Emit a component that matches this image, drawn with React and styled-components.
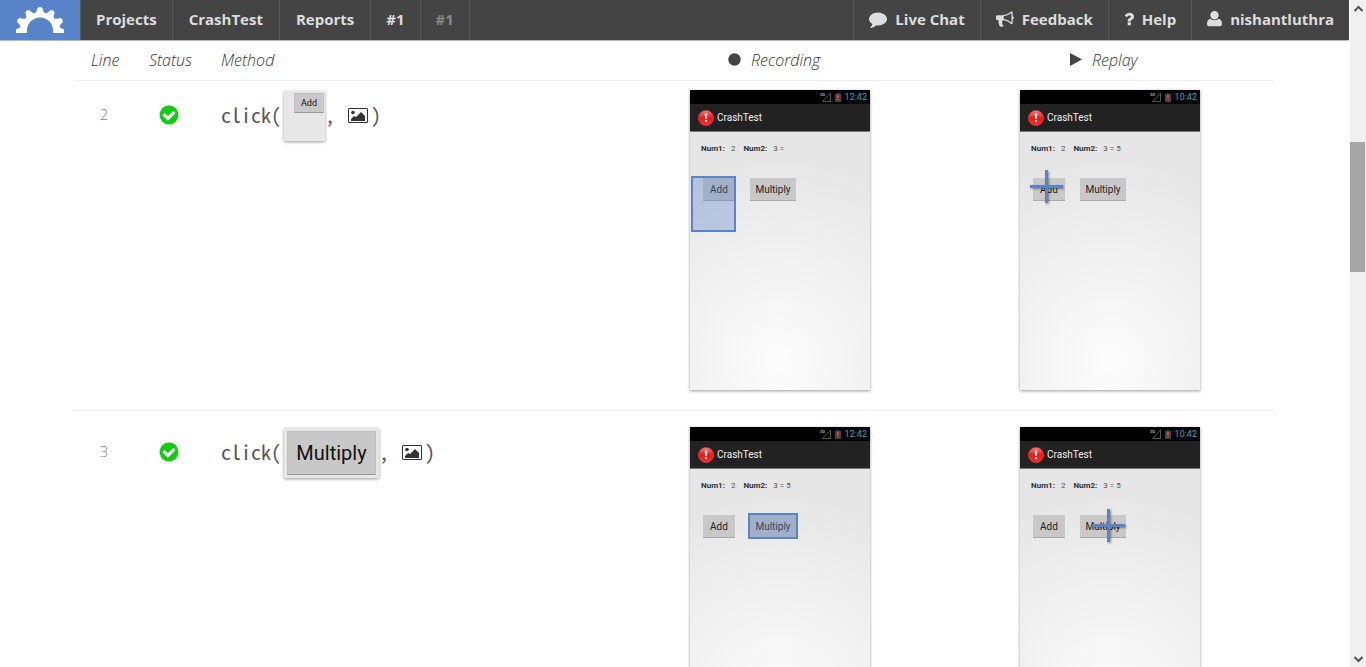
import React from 'react';
import styled, { createGlobalStyle } from 'styled-components';

const GlobalStyle = createGlobalStyle`
  * {
    box-sizing: border-box;
  }

  body {
    margin: 0;
    background: #fff;
    color: #333;
    font-family: 'Open Sans', sans-serif;
    font-size: 16px;
  }
`;

const Shell = styled.div`
  display: grid;
  grid-template-columns: 1fr 17px;
  height: 100vh;
  overflow: hidden;
`;

const Page = styled.div`
  min-width: 0;
  overflow: hidden;
`;

const TopBar = styled.header`
  display: flex;
  justify-content: space-between;
  height: 41px;
  background: #444;
  border-bottom: 1px solid #bbb;
`;

const Nav = styled.nav`
  display: flex;
`;

const LogoLink = styled.a`
  display: flex;
  align-items: center;
  justify-content: center;
  width: 80px;
  background: #5984c9;
`;

const NavLink = styled.a`
  display: flex;
  align-items: center;
  gap: 8px;
  padding: 0 ${({ $wide }) => ($wide ? '16px' : '15px')} 2px;
  border-left: 1px solid #575757;
  border-right: ${({ $last }) => ($last ? '1px solid #575757' : '0')};
  color: ${({ $muted }) => ($muted ? '#888' : '#ddd')};
  font-size: 15px;
  font-weight: 700;
  line-height: 20px;
  text-decoration: none;
  white-space: nowrap;
`;

const Icon = styled.svg`
  display: block;
  flex: none;
  fill: currentColor;
`;

const Steps = styled.table`
  width: calc(100% - 150px);
  max-width: 1200px;
  margin: 0 auto;
  border-collapse: separate;
  border-spacing: 0;
  table-layout: fixed;
`;

const HeadCell = styled.th`
  width: ${({ $width }) => $width || 'auto'};
  height: 40px;
  padding: 0 0 2px;
  padding-left: ${({ $indent }) => $indent || '0'};
  border-bottom: 1px solid #eee;
  font-style: italic;
  font-weight: 300;
  line-height: 20px;
  text-align: left;
`;

const HeadLabel = styled.span`
  display: flex;
  align-items: center;
  gap: 10px;
`;

const Cell = styled.td`
  padding: 16px 0 20px;
  border-bottom: 1px solid #eee;
  vertical-align: top;

  tr:first-child > & {
    padding-top: 9px;
  }
`;

const LineNumber = styled.div`
  width: 58px;
  padding-top: 14px;
  color: #888;
  font-size: 15px;
  font-weight: 300;
  line-height: 20px;
  text-align: center;
`;

const Status = styled.div`
  padding: 14px 0 0 9px;
  color: #12cc12;
`;

const Call = styled.div`
  display: flex;
  align-items: flex-start;
  color: #555;
  font-family: 'Noto Sans Mono CJK SC', 'Liberation Mono', monospace;
  font-size: 20px;
  line-height: 50px;
`;

const PictureButton = styled.button`
  display: block;
  margin: 18px 3px 0 13px;
  padding: 0;
  border: 0;
  background: none;
  color: #333;
`;

const Thumb = styled.div`
  width: ${({ $large }) => ($large ? '95px' : '41px')};
  height: 50px;
  margin: 1px 0 0 3px;
  padding: ${({ $large }) => ($large ? '3px' : '2px 1px 0 10px')};
  background: #e7e7e7;
  box-shadow: 0 1px 3px rgba(0, 0, 0, 0.4);
`;

const ThumbLabel = styled.div`
  height: ${({ $large }) => ($large ? '44px' : '20px')};
  border: 1px solid #c0c0c0;
  border-bottom-color: #999;
  background: #c8c8c8;
  color: #111;
  font-family: Roboto, sans-serif;
  font-size: ${({ $large }) => ($large ? '20px' : '9px')};
  line-height: ${({ $large }) => ($large ? '42px' : '18px')};
  text-align: center;
`;

const Phone = styled.div`
  position: relative;
  width: 180px;
  height: 300px;
  background: radial-gradient(circle at 50% 90%, #fcfcfc 0, #e6e6e6 200px);
  box-shadow: 0 1px 3px rgba(0, 0, 0, 0.4);
  color: #333;
  font-family: Roboto, sans-serif;
`;

const PhoneStatus = styled.div`
  display: flex;
  align-items: center;
  justify-content: flex-end;
  gap: 4px;
  height: 14px;
  padding-right: 3px;
  background: #000;
  color: #33a5d0;
  font-size: 9px;
`;

const PhoneTitle = styled.div`
  display: flex;
  align-items: center;
  gap: 3px;
  height: 28px;
  padding-left: 8px;
  border-bottom: 1px solid #777;
  background: #222;
  color: #eee;
  font-size: 10px;
`;

const PhoneSums = styled.div`
  display: flex;
  gap: 6px;
  padding: 11px 11px 0;
  color: #555;
  font-size: 8px;
  line-height: 12px;

  b {
    color: #333;
  }

  span {
    margin-right: 2px;
  }
`;

const PhoneButtons = styled.div`
  display: flex;
  gap: 15px;
  padding: 23px 13px 0;
`;

const PhoneButton = styled.button`
  width: ${({ $wide }) => ($wide ? '46px' : '32px')};
  height: 23px;
  padding: 0;
  border: 0;
  border-bottom: 1px solid #aaa;
  background: #c8c8c8;
  color: #222;
  font-family: inherit;
  font-size: 10px;
`;

const Selection = styled.div`
  position: absolute;
  top: 86px;
  left: ${({ $target }) => ($target === 'add' ? '1px' : '58px')};
  width: ${({ $target }) => ($target === 'add' ? '45px' : '50px')};
  height: ${({ $target }) => ($target === 'add' ? '56px' : '26px')};
  border: 2px solid #5984c9;
  background: rgba(89, 132, 201, 0.35);
`;

const Crosshair = styled.div`
  position: absolute;
  top: ${({ $target }) => ($target === 'add' ? '80px' : '82px')};
  left: ${({ $target }) => ($target === 'add' ? '10px' : '72px')};
  width: 33px;
  height: 33px;
  background:
    linear-gradient(#5984c9, #5984c9) center / 3px 100% no-repeat,
    linear-gradient(#5984c9, #5984c9) center / 100% 3px no-repeat;
  filter: drop-shadow(1px 1px 1px rgba(0, 0, 0, 0.4));
`;

const Scrollbar = styled.div`
  display: grid;
  grid-template-rows: 17px 1fr 17px;
  justify-items: center;
  margin-left: 1px;
  background: #f0f0f0;
  color: #555;
`;

const ScrollTrack = styled.div`
  width: 100%;
  padding: 125px 1px 0 0;
`;

const ScrollThumb = styled.div`
  height: 130px;
  background: #a6a6a6;
`;

// width is in pixels at 18px height, box is the matching viewBox
const icons = {
  comment: {
    width: 18,
    box: '0 0 1792 1792',
    path: 'M1792 896q0 174-120 321.5t-326 233-450 85.5q-70 0-145-8-198 175-460 242-49 14-114 22-17 2-30.5-9t-17.5-29v-1q-3-4-.5-12t2-10 4.5-9.5l6-9 7-8.5 8-9q7-8 31-34.5t34.5-38 31-39.5 32.5-51 27-59 26-76q-157-89-247.5-220t-90.5-281q0-130 71-248.5t191-204.5 286-136.5 348-50.5q244 0 450 85.5t326 233 120 321.5z',
  },
  bullhorn: {
    width: 18,
    box: '0 0 1792 1792',
    path: 'M1664 640q53 0 90.5 37.5t37.5 90.5-37.5 90.5-90.5 37.5v384q0 52-38 90t-90 38q-417-347-812-380-58 19-91 66t-31 100.5 40 92.5q-20 33-23 65.5t6 58 33.5 55 48 50 61.5 50.5q-29 58-111.5 83t-168.5 11.5-132-55.5q-7-23-29.5-87.5t-32-94.5-23-89-15-101 3.5-98.5 22-110.5h-122q-66 0-113-47t-47-113v-192q0-66 47-113t113-47h480q435 0 896-384 52 0 90 38t38 90v384zm-128 604v-954q-394 302-768 343v270q377 42 768 341z',
  },
  question: {
    width: 10,
    box: '400 0 1004 1792',
    path: 'M1088 1256v240q0 16-12 28t-28 12h-240q-16 0-28-12t-12-28v-240q0-16 12-28t28-12h240q16 0 28 12t12 28zm316-600q0 54-15.5 101t-35 76.5-55 59.5-57.5 43.5-61 35.5q-41 23-68.5 65t-27.5 67q0 17-12 32.5t-28 15.5h-240q-15 0-25.5-18.5t-10.5-37.5v-45q0-83 65-156.5t143-108.5q59-27 84-56t25-76q0-42-46.5-74t-107.5-32q-65 0-108 29-35 25-107 115-13 16-31 16-12 0-25-8l-164-125q-13-10-15.5-25t5.5-28q160-266 464-266 80 0 161 31t146 83 106 127.5 41 158.5z',
  },
  user: {
    width: 15,
    box: '0 0 15 18',
    path: 'M7.500 1a4.200 4.200 0 0 1 4.200 4.200 4.200 4.200 0 0 1-8.400 0A4.200 4.200 0 0 1 7.500 1zM0 14q0-4.500 3.300-5.300 4.200 3 8.400 0Q15 9.500 15 14q0 2.200-2 2.200H2q-2 0-2-2.200z',
  },
};

const steps = [
  { line: 2, target: 'add', label: 'Add', recorded: '3 =', replayed: '3 = 5' },
  { line: 3, target: 'multiply', label: 'Multiply', recorded: '3 = 5', replayed: '3 = 5' },
];

const teeth = [-87, -59, -30, 0, 30, 59, 87];

const Logo = () => (
  <Icon width="48" height="26" viewBox="0 0 48 26">
    <mask id="gear">
      <rect width="48" height="26" fill="#fff" />
      <circle cx="24" cy="23.500" r="13" fill="#000" />
    </mask>
    <g mask="url(#gear)" fill="#fff">
      <circle cx="24" cy="26" r="20.500" />
      {teeth.map((angle) => (
        <path
          key={angle}
          d="M18.500 7.500l2.500-4q0-3.500 3-3.500t3 3.500l2.500 4z"
          transform={`rotate(${angle} 24 26)`}
        />
      ))}
    </g>
  </Icon>
);

const CheckIcon = () => (
  <Icon width="22" height="22" viewBox="0 0 1792 1792">
    <path d="M1412 734q0-28-18-46l-91-90q-19-19-45-19t-45 19l-408 407-226-226q-19-19-45-19t-45 19l-91 90q-18 18-18 46 0 27 18 45l362 362q19 19 45 19 27 0 46-19l543-543q18-18 18-45zm252 162q0 209-103 385.5t-279.5 279.5-385.5 103-385.5-103-279.5-279.5-103-385.5 103-385.5 279.5-279.5 385.5-103 385.5 103 279.5 279.5 103 385.5z" />
  </Icon>
);

const PictureIcon = () => (
  <Icon width="20" height="15" viewBox="0 0 20 15">
    <rect x="0.5" y="0.5" width="19" height="14" rx="0.5" fill="none" stroke="currentColor" />
    <circle cx="5" cy="4.500" r="1.800" />
    <path d="M3 13v-2l3-3 2 1 5-5 4 4v5z" />
  </Icon>
);

const SignalIcon = () => (
  <Icon width="11" height="10" viewBox="0 0 11 10">
    <path d="M2.500 9.500l8-8.500v8.500z" fill="none" stroke="#555" />
    <text x="0" y="4" fill="#aaa" fontSize="4" fontWeight="700">3G</text>
  </Icon>
);

const BatteryIcon = () => (
  <Icon width="6" height="9" viewBox="0 0 6 9">
    <path d="M0 1h2V0h2v1h2v8H0z" fill="#444" />
    <path d="M2 2h2v3H2zM2 6h2v1H2z" fill="#f33" />
  </Icon>
);

const AlertIcon = () => (
  <Icon width="16" height="16" viewBox="0 0 16 16">
    <defs>
      <linearGradient id="alert" x1="0" y1="0" x2="0" y2="1">
        <stop offset="0" stopColor="#ff7a7a" />
        <stop offset="0.5" stopColor="#f41414" />
        <stop offset="1" stopColor="#ff3030" />
      </linearGradient>
    </defs>
    <circle cx="8" cy="8" r="7.600" fill="url(#alert)" stroke="#c44" strokeWidth="0.7" />
    <path d="M6.700 3.500h2.600l-.5 5.500H7.200zM7 10h2v2H7z" fill="#fff" />
  </Icon>
);

const PhoneScreen = ({ time, result, children }) => (
  <Phone>
    <PhoneStatus>
      <SignalIcon />
      <BatteryIcon />
      {time}
    </PhoneStatus>
    <PhoneTitle>
      <AlertIcon />
      CrashTest
    </PhoneTitle>
    <PhoneSums>
      <b>Num1:</b>
      <span>2</span>
      <b>Num2:</b>
      <span>{result}</span>
    </PhoneSums>
    <PhoneButtons>
      <PhoneButton type="button">Add</PhoneButton>
      <PhoneButton type="button" $wide>Multiply</PhoneButton>
    </PhoneButtons>
    {children}
  </Phone>
);

const MenuIcon = ({ name }) => (
  <Icon width={icons[name].width} height="18" viewBox={icons[name].box}>
    <path d={icons[name].path} />
  </Icon>
);

const App = () => {
  return (
    <>
      <GlobalStyle />
      <Shell>
        <Page>
          <TopBar>
            <Nav>
              <LogoLink href="#home" aria-label="Home"><Logo /></LogoLink>
              <NavLink href="#projects">Projects</NavLink>
              <NavLink href="#crashtest" $wide>CrashTest</NavLink>
              <NavLink href="#reports" $wide>Reports</NavLink>
              <NavLink href="#report">#1</NavLink>
              <NavLink href="#run" $muted $last>#1</NavLink>
            </Nav>
            <Nav>
              <NavLink href="#chat"><MenuIcon name="comment" />Live Chat</NavLink>
              <NavLink href="#feedback"><MenuIcon name="bullhorn" />Feedback</NavLink>
              <NavLink href="#help"><MenuIcon name="question" />Help</NavLink>
              <NavLink href="#user"><MenuIcon name="user" />nishantluthra</NavLink>
            </Nav>
          </TopBar>
          <Steps>
            <thead>
              <tr>
                <HeadCell $width="74px" $indent="16px">Line</HeadCell>
                <HeadCell $width="72px">Status</HeadCell>
                <HeadCell>Method</HeadCell>
                <HeadCell $width="330px" $indent="38px">
                  <HeadLabel>
                    <Icon width="13" height="13" viewBox="0 0 13 13"><circle cx="6.500" cy="6.500" r="6.200" fill="#444" /></Icon>
                    Recording
                  </HeadLabel>
                </HeadCell>
                <HeadCell $width="254px" $indent="50px">
                  <HeadLabel>
                    <Icon width="12" height="13" viewBox="0 0 12 13"><path d="M0 0l12 6.500L0 13z" fill="#444" /></Icon>
                    Replay
                  </HeadLabel>
                </HeadCell>
              </tr>
            </thead>
            <tbody>
              {steps.map(({ line, target, label, recorded, replayed }) => (
                <tr key={line}>
                  <Cell><LineNumber>{line}</LineNumber></Cell>
                  <Cell>
                    <Status><CheckIcon /></Status>
                  </Cell>
                  <Cell>
                    <Call>
                      click(
                      <Thumb $large={target === 'multiply'}>
                        <ThumbLabel $large={target === 'multiply'}>{label}</ThumbLabel>
                      </Thumb>
                      ,
                      <PictureButton type="button" aria-label="Show picture"><PictureIcon /></PictureButton>
                      )
                    </Call>
                  </Cell>
                  <Cell>
                    <PhoneScreen time="12:42" result={recorded}>
                      <Selection $target={target} />
                    </PhoneScreen>
                  </Cell>
                  <Cell>
                    <PhoneScreen time="10:42" result={replayed}>
                      <Crosshair $target={target} />
                    </PhoneScreen>
                  </Cell>
                </tr>
              ))}
            </tbody>
          </Steps>
        </Page>
        <Scrollbar aria-hidden="true">
          <Icon width="9" height="17" viewBox="0 0 9 17"><path d="M0.500 11L4.500 7l4 4" fill="none" stroke="currentColor" strokeWidth="2" /></Icon>
          <ScrollTrack><ScrollThumb /></ScrollTrack>
          <Icon width="9" height="17" viewBox="0 0 9 17"><path d="M0.500 7l4 4 4-4" fill="none" stroke="currentColor" strokeWidth="2" /></Icon>
        </Scrollbar>
      </Shell>
    </>
  );
};

export default App;
